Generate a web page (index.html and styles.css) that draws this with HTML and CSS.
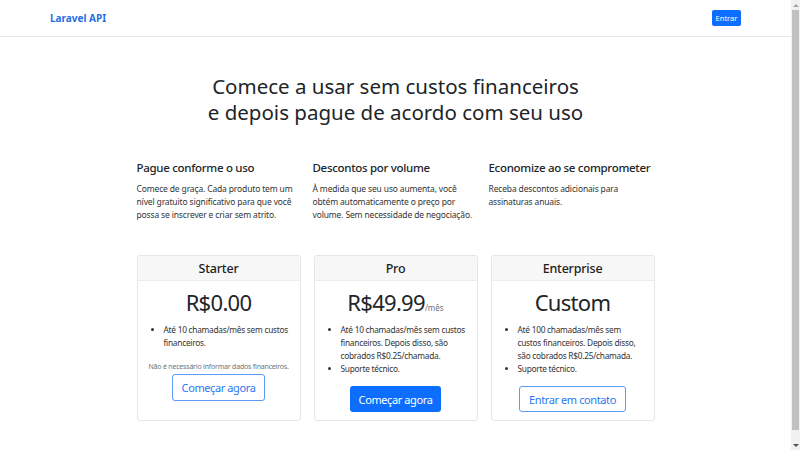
FILE: index.html
```html
<!DOCTYPE html>
<html lang="pt-BR">
<head>
<meta charset="utf-8">
<title>Laravel API</title>
<link rel="stylesheet" href="styles.css">
</head>
<body>
<div class="page">
  <header class="navbar">
    <div class="nav-inner">
      <a class="brand" href="#">Laravel API</a>
      <a class="btn-nav" href="#">Entrar</a>
    </div>
  </header>
  <main class="main">
    <h1 class="hero">Comece a usar sem custos financeiros<br>e depois pague de acordo com seu uso</h1>
    <section class="features">
      <div class="feature">
        <h2>Pague conforme o uso</h2>
        <p>Comece de graça. Cada produto tem um nível gratuito significativo para que você possa se inscrever e criar sem atrito.</p>
      </div>
      <div class="feature">
        <h2>Descontos por volume</h2>
        <p>À medida que seu uso aumenta, você obtém automaticamente o preço por volume. Sem necessidade de negociação.</p>
      </div>
      <div class="feature">
        <h2>Economize ao se comprometer</h2>
        <p>Receba descontos adicionais para assinaturas anuais.</p>
      </div>
    </section>
    <section class="cards">
      <div class="card">
        <div class="card-header">Starter</div>
        <div class="card-body">
          <div class="price">R$0.00</div>
          <ul class="list">
            <li>Até 10 chamadas/mês sem custos financeiros.</li>
          </ul>
          <p class="note">Não é necessário informar dados financeiros.</p>
          <a class="btn btn-outline" href="#">Começar agora</a>
        </div>
      </div>
      <div class="card">
        <div class="card-header">Pro</div>
        <div class="card-body">
          <div class="price">R$49.99<small>/mês</small></div>
          <ul class="list">
            <li>Até 10 chamadas/mês sem custos financeiros. Depois disso, são cobrados R$0.25/chamada.</li>
            <li>Suporte técnico.</li>
          </ul>
          <a class="btn btn-primary" href="#">Começar agora</a>
        </div>
      </div>
      <div class="card">
        <div class="card-header">Enterprise</div>
        <div class="card-body">
          <div class="price">Custom</div>
          <ul class="list">
            <li>Até 100 chamadas/mês sem custos financeiros. Depois disso, são cobrados R$0.25/chamada.</li>
            <li>Suporte técnico.</li>
          </ul>
          <a class="btn btn-outline" href="#">Entrar em contato</a>
        </div>
      </div>
    </section>
  </main>
</div>
<div class="scrollbar">
  <span class="sb-btn"><span class="arrow-up"></span></span>
  <span class="sb-thumb"></span>
  <span class="sb-btn"><span class="arrow-down"></span></span>
</div>
</body>
</html>
```

FILE: styles.css
```css
html, body {
  margin: 0;
  height: 450px;
  overflow: hidden;
  background: #fff;
}
body {
  display: flex;
  font-family: "Noto Sans", "Open Sans", sans-serif;
  color: #212529;
}
a {
  text-decoration: none;
}
.page {
  width: 791px;
  flex: none;
}
.scrollbar {
  width: 9px;
  height: 450px;
  background: #f1f1f1;
  display: flex;
  flex-direction: column;
}
.sb-btn {
  height: 10px;
  flex: none;
  display: flex;
  align-items: center;
  justify-content: center;
}
.arrow-up {
  width: 0;
  height: 0;
  border-left: 3px solid transparent;
  border-right: 3px solid transparent;
  border-bottom: 3px solid #a3a3a3;
}
.arrow-down {
  width: 0;
  height: 0;
  border-left: 3px solid transparent;
  border-right: 3px solid transparent;
  border-top: 3px solid #505050;
}
.sb-thumb {
  flex: 1;
  margin: 0 1px 10px;
  background: #c1c1c1;
}
.navbar {
  height: 36px;
  border-bottom: 1px solid #e8e8e8;
}
.nav-inner {
  width: 691px;
  height: 100%;
  margin: 0 auto;
  display: flex;
  align-items: center;
  justify-content: space-between;
}
.brand {
  color: #1f6fe5;
  font-weight: 700;
  font-size: 10px;
}
.btn-nav {
  background: #0d6efd;
  color: #fff;
  font-size: 7.5px;
  height: 16px;
  width: 29px;
  display: flex;
  align-items: center;
  justify-content: center;
  border-radius: 2px;
  margin-top: -1px;
}
.main {
  width: 518px;
  margin: 0 auto;
  padding-top: 36px;
}
.hero {
  margin: 0;
  text-align: center;
  font-weight: 400;
  font-size: 20.5px;
  line-height: 26px;
  color: #212529;
}
.features {
  margin-top: 35px;
  display: grid;
  grid-template-columns: 164px 164px 164px;
  column-gap: 12px;
}
.feature h2 {
  margin: 0;
  font-size: 11.5px;
  line-height: 15px;
  font-weight: 500;
  letter-spacing: -0.3px;
  color: #212529;
}
.feature p {
  margin: 7px 0 0;
  font-size: 8.5px;
  line-height: 13px;
  letter-spacing: -0.15px;
  color: #333;
}
.cards {
  margin-top: 34px;
  display: grid;
  grid-template-columns: 164px 164px 164px;
  column-gap: 13px;
}
.card {
  border: 1px solid #e6e6e6;
  border-radius: 3px;
  display: flex;
  flex-direction: column;
}
.card-header {
  flex: none;
  background: #f7f7f7;
  border-bottom: 1px solid #ececec;
  height: 24px;
  display: flex;
  align-items: center;
  justify-content: center;
  font-size: 12.5px;
  font-weight: 500;
  letter-spacing: -0.2px;
  color: #222;
}
.card-body {
  padding: 7px 8px 8px;
  display: flex;
  flex-direction: column;
  align-items: center;
}
.price {
  font-size: 22px;
  line-height: 28px;
  letter-spacing: -0.7px;
  color: #212529;
}
.price small {
  font-size: 8px;
  line-height: 1;
  letter-spacing: 0;
  color: #6c757d;
}
.list {
  margin: 7px 0 0;
  padding: 0 0 0 18px;
  align-self: stretch;
  font-size: 8.3px;
  line-height: 13px;
  letter-spacing: -0.25px;
  color: #333;
}
.note {
  margin: 12px 0 0;
  font-size: 7px;
  line-height: 12px;
  letter-spacing: -0.2px;
  white-space: nowrap;
  color: #6c757d;
}
.btn {
  display: flex;
  align-items: center;
  justify-content: center;
  border-radius: 3px;
  font-size: 11px;
  letter-spacing: -0.4px;
  height: 26px;
  box-sizing: border-box;
  padding: 0 9px;
  margin-top: 11px;
}
.note + .btn {
  margin-top: 1px;
  height: 27px;
}
.btn-outline {
  border: 1px solid #5c9af7;
  color: #2a78f2;
}
.btn-primary {
  background: #0d6efd;
  color: #fff;
}
```
